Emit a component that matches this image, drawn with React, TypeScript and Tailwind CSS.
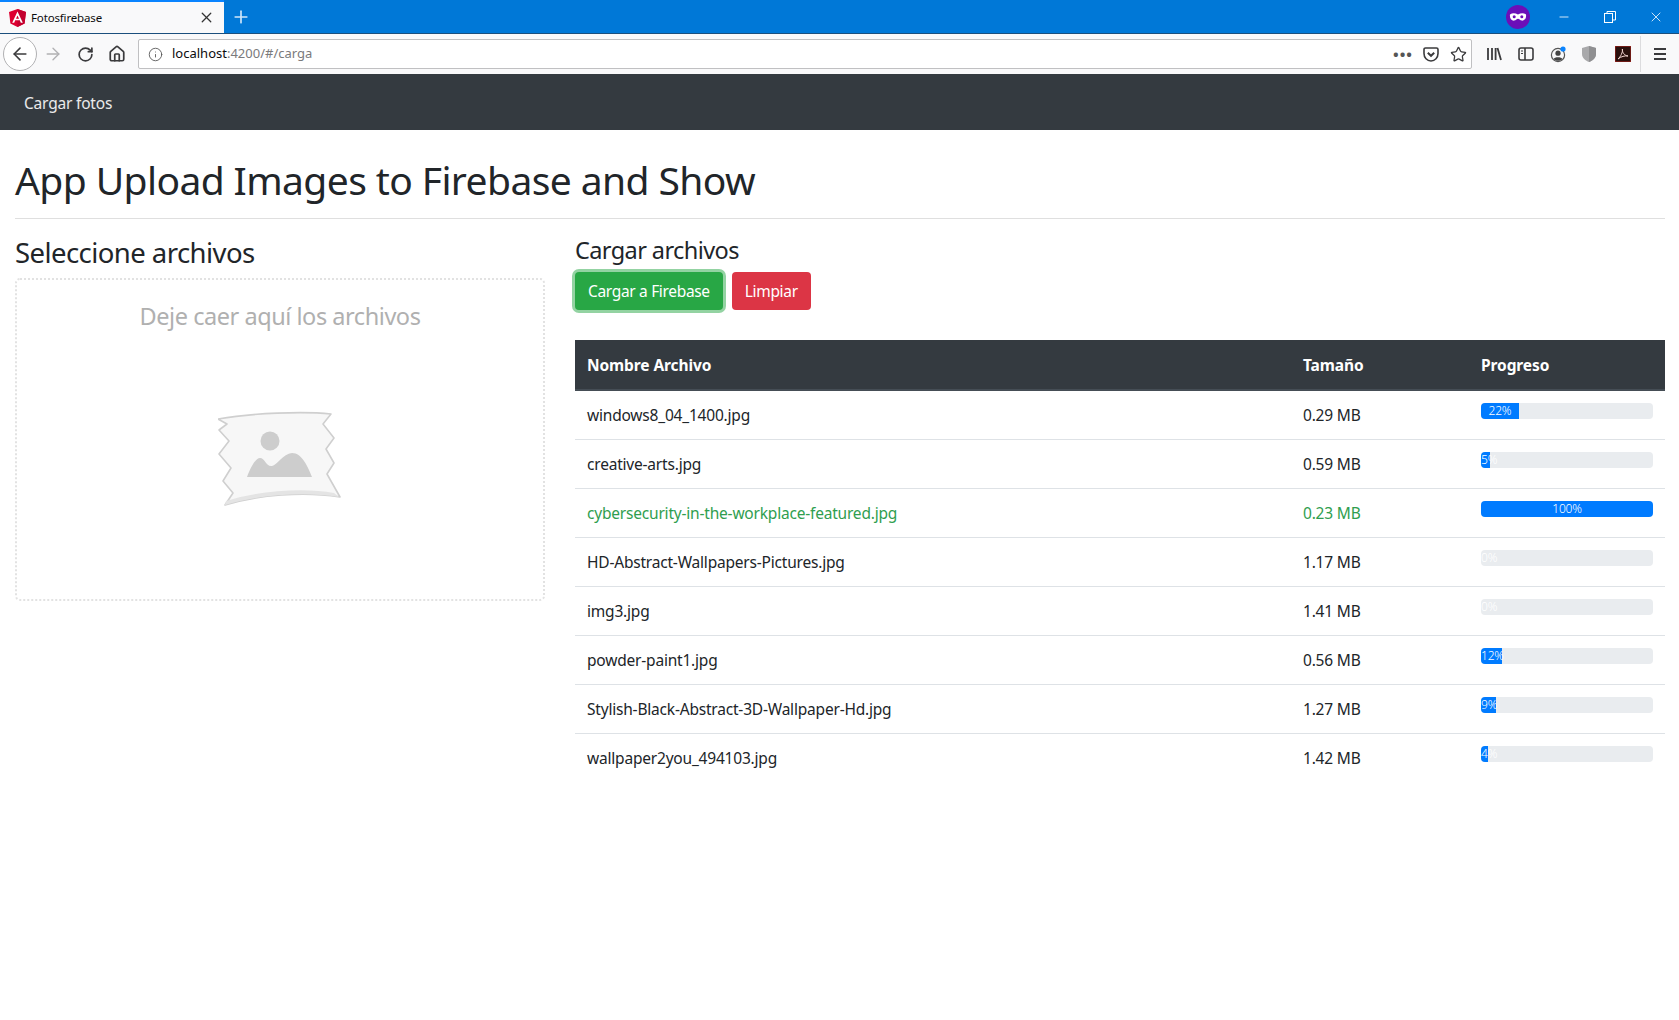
import { ArrowLeft, ArrowRight, Home, Info, Minus, Plus, RotateCw, Star, X } from "lucide-react";

const files = [
  { name: "windows8_04_1400.jpg", size: "0.29 MB", progress: 22 },
  { name: "creative-arts.jpg", size: "0.59 MB", progress: 5 },
  { name: "cybersecurity-in-the-workplace-featured.jpg", size: "0.23 MB", progress: 100, done: true },
  { name: "HD-Abstract-Wallpapers-Pictures.jpg", size: "1.17 MB", progress: 0 },
  { name: "img3.jpg", size: "1.41 MB", progress: 0 },
  { name: "powder-paint1.jpg", size: "0.56 MB", progress: 12 },
  { name: "Stylish-Black-Abstract-3D-Wallpaper-Hd.jpg", size: "1.27 MB", progress: 9 },
  { name: "wallpaper2you_494103.jpg", size: "1.42 MB", progress: 4 },
];

function AngularLogo() {
  return (
    <svg width="17" height="18" viewBox="0 0 17 18">
      <path d="M8.5 0 L17 3 L15.6 14.4 L8.5 18 L1.4 14.4 L0 3 Z" fill="#dd0031" />
      <path d="M8.5 0 L17 3 L15.6 14.4 L8.5 18 Z" fill="#c3002f" />
      <path d="M8.5 2.4 L3.2 13.8 H5.2 L6.2 11.3 H10.8 L11.8 13.8 H13.8 Z M8.5 6.4 L10 9.7 H7 Z" fill="#fff" fillRule="evenodd" />
    </svg>
  );
}

function TabStrip() {
  return (
    <div className="flex h-[33px] items-stretch bg-[#0078d7]">
      <div className="flex w-[224px] items-center border-t-2 border-[#0a84ff] bg-[#f9f9fa] pl-[9px] pr-[9px]">
        <AngularLogo />
        <span className="ml-[5px] flex-1 text-[11.5px] tracking-[-0.15px] text-[#0c0c0d]">Fotosfirebase</span>
        <X size={17} strokeWidth={1.8} className="text-[#333]" />
      </div>
      <div className="flex w-[34px] items-center justify-center">
        <Plus size={20} strokeWidth={2} className="text-[#cfe6fa]" />
      </div>
      <div className="flex-1" />
      <div className="flex w-[46px] items-center justify-center">
        <svg width="24" height="24" viewBox="0 0 24 24">
          <circle cx="12" cy="12" r="12" fill="#6b0fb8" />
          <path d="M4 9.5 C7 7.5 9.5 8.5 12 9.5 C14.5 8.5 17 7.5 20 9.5 C20.6 13 18.5 16 15.8 15.6 C14 15.3 13.2 13.8 12 13.8 C10.8 13.8 10 15.3 8.2 15.6 C5.5 16 3.4 13 4 9.5 Z" fill="#fff" />
          <circle cx="8.2" cy="11.7" r="1.5" fill="#6b0fb8" />
          <circle cx="15.8" cy="11.7" r="1.5" fill="#6b0fb8" />
        </svg>
      </div>
      <div className="flex w-[46px] items-center justify-center">
        <Minus size={14} strokeWidth={1.4} className="text-white" />
      </div>
      <div className="flex w-[46px] items-center justify-center">
        <svg width="12" height="12" viewBox="0 0 12 12" fill="none" stroke="#fff">
          <rect x="0.5" y="2.5" width="8" height="9" />
          <path d="M3 2.5 V0.5 H11.5 V9 H8.5" />
        </svg>
      </div>
      <div className="flex w-[46px] items-center justify-center">
        <X size={16} strokeWidth={1.2} className="text-white" />
      </div>
    </div>
  );
}

function ToolbarIcons() {
  return (
    <div className="ml-[6px] flex items-center text-[#3b3b3d]">
      <div className="flex w-[32px] justify-center">
        <svg width="16" height="16" viewBox="0 0 16 16" fill="none" stroke="currentColor" strokeWidth="1.8">
          <path d="M2 2 V14 M6 2 V14 M9.6 2 V14 M11.5 2 L15 14" />
        </svg>
      </div>
      <div className="flex w-[32px] justify-center">
        <svg width="16" height="16" viewBox="0 0 16 16" fill="none" stroke="currentColor" strokeWidth="1.6">
          <rect x="1" y="2" width="14" height="12" rx="2" />
          <path d="M7 2 V14" />
          <path d="M3 5 H5 M3 7.5 H5" strokeWidth="1.2" />
        </svg>
      </div>
      <div className="flex w-[31px] justify-center">
        <svg width="16" height="17" viewBox="0 0 16 17" fill="none">
          <circle cx="8" cy="9" r="6.6" stroke="#555" strokeWidth="1.2" />
          <circle cx="8" cy="7.2" r="2.6" fill="#444" />
          <path d="M3.6 13 C4.5 10.5 11.5 10.5 12.4 13 C10.5 15.4 5.5 15.4 3.6 13 Z" fill="#444" />
          <circle cx="13" cy="3" r="2.6" fill="#0a84ff" />
        </svg>
      </div>
      <div className="flex w-[32px] justify-center">
        <svg width="14" height="16" viewBox="0 0 14 16">
          <path d="M7 0 L14 2 V8 C14 12 10.5 14.8 7 16 C3.5 14.8 0 12 0 8 V2 Z" fill="#a9a9ab" />
          <path d="M7 0 L14 2 V8 C14 12 10.5 14.8 7 16 Z" fill="#8f8f91" />
        </svg>
      </div>
      <div className="flex w-[35px] justify-center">
        <svg width="16" height="16" viewBox="0 0 16 16" fill="none">
          <rect width="16" height="16" fill="#2a0f0c" stroke="#b3261e" />
          <path d="M3 13 C5.5 11 8 6 7.4 3 C7 6 9 9.5 13 10 C10 9.5 6 10.5 3 13 Z" stroke="#f4d6d2" strokeWidth="1" />
        </svg>
      </div>
      <div className="h-[36px] w-px bg-[#dcdcde]" />
      <div className="flex w-[38px] justify-center">
        <svg width="14" height="12" viewBox="0 0 14 12" stroke="currentColor" strokeWidth="2">
          <path d="M1 1 H13 M1 6 H13 M1 11 H13" />
        </svg>
      </div>
    </div>
  );
}

function Toolbar() {
  return (
    <div className="flex h-[41px] items-center border-t border-[#1b4f7d] bg-[#f9f9fa] pl-[3px]">
      <div className="flex h-[34px] w-[34px] items-center justify-center rounded-full border border-[#b1b1b3] bg-white">
        <ArrowLeft size={20} strokeWidth={1.9} className="text-[#3b3b3d]" />
      </div>
      <div className="flex w-[32px] justify-center">
        <ArrowRight size={20} strokeWidth={1.6} className="text-[#b1b1b3]" />
      </div>
      <div className="flex w-[32px] justify-center">
        <RotateCw size={17} strokeWidth={2.4} className="text-[#3b3b3d]" />
      </div>
      <div className="flex w-[32px] justify-center">
        <Home size={18} strokeWidth={2.3} className="text-[#3b3b3d]" />
      </div>
      <div className="ml-[5px] flex h-[30px] flex-1 items-center rounded-[2px] border border-[#c0c0c2] bg-white pl-[9px] pr-[4px]">
        <Info size={15} strokeWidth={1.4} className="text-[#555]" />
        <span className="ml-[9px] flex-1 text-[13px] text-[#0c0c0d]">
          localhost<span className="text-[#7a7a7c]">:4200/#/carga</span>
        </span>
        <span className="text-[15px] font-bold leading-none tracking-[1px] text-[#555]">•••</span>
        <svg width="16" height="15" viewBox="0 0 16 15" fill="none" stroke="#3b3b3d" strokeWidth="1.6" className="ml-[10px]">
          <path d="M2.5 1 H13.5 C14.4 1 15 1.6 15 2.5 V6.5 C15 10.6 12 14 8 14 C4 14 1 10.6 1 6.5 V2.5 C1 1.6 1.6 1 2.5 1 Z" />
          <path d="M4.8 5.8 L8 8.8 L11.2 5.8" strokeWidth="2" />
        </svg>
        <Star size={17} strokeWidth={1.8} className="ml-[11px] text-[#3b3b3d]" />
      </div>
      <ToolbarIcons />
    </div>
  );
}

function ImagePlaceholder() {
  return (
    <svg width="124" height="100" viewBox="0 0 124 100">
      <path
        d="M0 8 C35 2 85 0 113 3 L105 13 L116 27 L108 38 L116 52 L109 63 L122 86 C85 80 40 84 7 94 L15 82 L5 70 L13 57 L1 43 L11 30 L1 19 L9 13 Z"
        fill="#f7f7f7"
        stroke="#cfcfcf"
        strokeWidth="1.6"
        strokeLinejoin="round"
      />
      <path d="M8 90 C40 80 85 76 116 82 L121 86 C85 80 40 84 7 94 Z" fill="#e4e4e4" />
      <circle cx="52" cy="30" r="9.5" fill="#cdcdcd" />
      <path d="M29 66 C33 55 38 47 42 47 C47 47 48 56 54 55 C59 54 65 43 74 42 C84 42 90 56 94 66 Z" fill="#cdcdcd" />
    </svg>
  );
}

function ProgressBar({ value }: { value: number }) {
  return (
    <div className="flex h-[16px] overflow-hidden rounded-[4px] bg-[#e9ecef] text-[12px] font-light leading-[16px] text-white">
      <div className="whitespace-nowrap bg-[#007bff] text-center" style={{ width: `${value}%` }}>
        {value}%
      </div>
    </div>
  );
}

export default function App() {
  return (
    <div className="min-h-[1020px] bg-white font-['Noto_Sans','Open_Sans',sans-serif] text-[#212529]">
      <TabStrip />
      <Toolbar />
      <nav className="flex h-[56px] items-center bg-[#343a40] px-[24px] pt-[4px] text-[15.5px] tracking-[-0.2px] text-white/90">
        Cargar fotos
      </nav>

      <main className="pl-[15px] pr-[14px]">
        <h1 className="mt-[26px] text-[39px] leading-[48px] tracking-[-0.6px]">App Upload Images to Firebase and Show</h1>
        <hr className="mt-[14px] border-[#dfdfdf]" />

        <div className="mt-[17px] flex gap-[30px]">
          <section className="w-[530px]">
            <h3 className="text-[27.5px] leading-[34px] tracking-[-0.56px]">Seleccione archivos</h3>
            <div className="mt-[8px] flex h-[323px] flex-col items-center rounded-[5px] border-2 border-dotted border-[#e2e2e2]">
              <p className="mt-[20px] text-[23.5px] leading-[32px] tracking-[-0.45px] text-[#b0b0b0]">Deje caer aquí los archivos</p>
              <div className="mt-[79px]">
                <ImagePlaceholder />
              </div>
            </div>
          </section>

          <section className="flex-1">
            <h4 className="text-[23.5px] leading-[29px] tracking-[-0.59px]">Cargar archivos</h4>
            <div className="mt-[7px] flex gap-[9px]">
              <button className="h-[38px] rounded-[4px] bg-[#28a745] px-[13px] pt-[1px] text-[15.5px] tracking-[-0.33px] text-white shadow-[0_0_0_3px_rgba(40,167,69,0.5)]">
                Cargar a Firebase
              </button>
              <button className="h-[38px] rounded-[4px] bg-[#dc3545] px-[13px] pt-[1px] text-[15.5px] tracking-[-0.33px] text-white">
                Limpiar
              </button>
            </div>

            <table className="mt-[30px] w-full table-fixed border-collapse text-left text-[15.5px] tracking-[-0.2px]">
              <thead className="bg-[#343a40] text-white">
                <tr className="border-b-2 border-[#454d55]">
                  <th className="w-[716px] px-[12px] pb-[12px] pt-[14px] font-bold tracking-[-0.1px]">Nombre Archivo</th>
                  <th className="w-[178px] px-[12px] pb-[12px] pt-[14px] font-bold tracking-[-0.1px]">Tamaño</th>
                  <th className="px-[12px] pb-[12px] pt-[14px] font-bold tracking-[-0.1px]">Progreso</th>
                </tr>
              </thead>
              <tbody>
                {files.map((file, i) => (
                  <tr key={file.name} className={`${i > 0 ? "border-t border-[#dee2e6]" : ""} ${file.done ? "text-[#2f9e4f]" : ""}`}>
                    <td className="p-[12px] leading-[24px]">{file.name}</td>
                    <td className="p-[12px] leading-[24px]">{file.size}</td>
                    <td className="h-[48px] px-[12px] pb-[20px] pt-[12px] align-top">
                      <ProgressBar value={file.progress} />
                    </td>
                  </tr>
                ))}
              </tbody>
            </table>
          </section>
        </div>
      </main>
    </div>
  );
}
